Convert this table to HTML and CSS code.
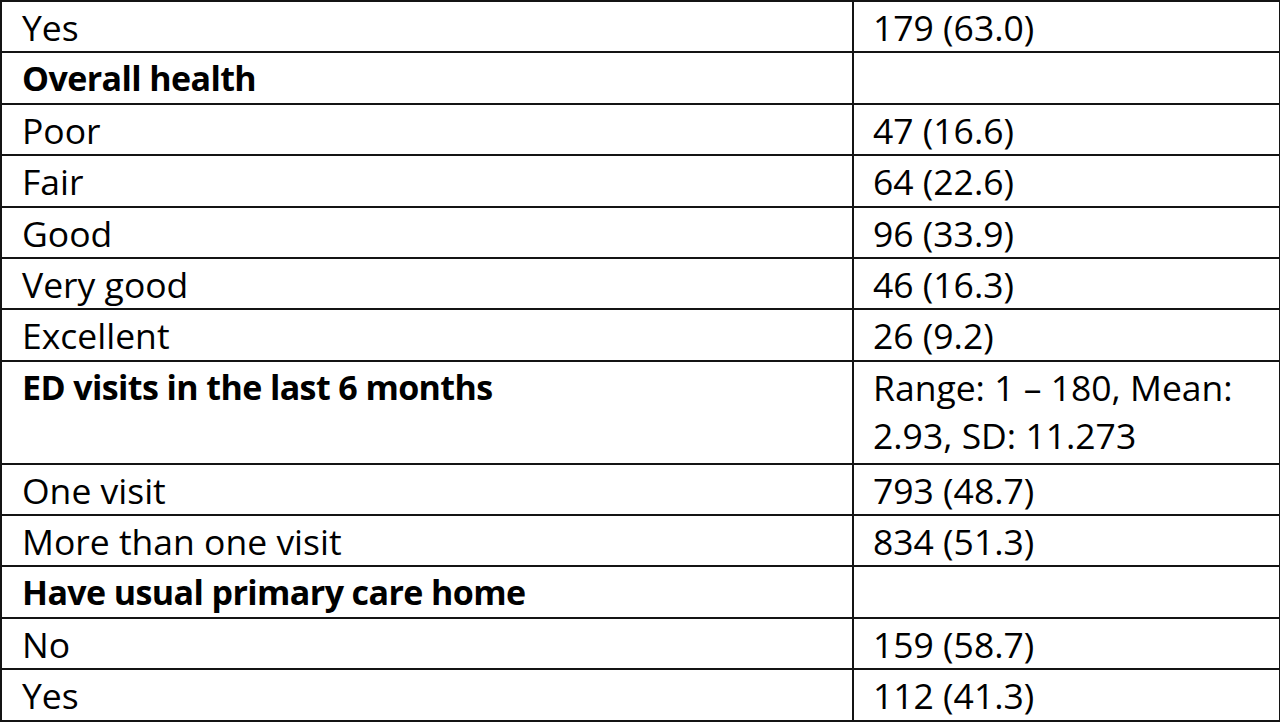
FILE: index.html
```html
<!DOCTYPE html>
<html>
<head>
<meta charset="utf-8">
<link rel="stylesheet" href="styles.css">
</head>
<body>
<table class="stats">
  <colgroup><col class="c-label"><col class="c-value"></colgroup>
  <tbody>
    <tr><td>Yes</td><td class="val">179 (63.0)</td></tr>
    <tr><td class="head">Overall health</td><td class="val"></td></tr>
    <tr><td>Poor</td><td class="val">47 (16.6)</td></tr>
    <tr><td>Fair</td><td class="val">64 (22.6)</td></tr>
    <tr><td>Good</td><td class="val">96 (33.9)</td></tr>
    <tr><td>Very good</td><td class="val">46 (16.3)</td></tr>
    <tr><td>Excellent</td><td class="val">26 (9.2)</td></tr>
    <tr class="tall"><td class="head">ED visits in the last 6 months</td><td class="val">Range: 1 – 180, Mean: 2.93, SD: 11.273</td></tr>
    <tr><td>One visit</td><td class="val">793 (48.7)</td></tr>
    <tr><td>More than one visit</td><td class="val">834 (51.3)</td></tr>
    <tr><td class="head">Have usual primary care home</td><td class="val"></td></tr>
    <tr><td>No</td><td class="val">159 (58.7)</td></tr>
    <tr><td>Yes</td><td class="val">112 (41.3)</td></tr>
  </tbody>
</table>
</body>
</html>
```
FILE: styles.css
```css
html, body {
  margin: 0;
  padding: 0;
  background: #ffffff;
}
.stats {
  border-collapse: collapse;
  width: 1279px;
  table-layout: fixed;
  font-family: "Open Sans", Lato, sans-serif;
  font-size: 35.5px;
  line-height: 48.4px;
  color: #000;
}
.c-label { width: 852px; }
.c-value { width: 427px; }
.stats td {
  border: 2px solid #141414;
  padding: 1px 20px 0 20px;
  vertical-align: top;
  white-space: nowrap;
}
.stats tr.tall td { padding-bottom: 3px; white-space: normal; }
.stats td.val { padding-left: 19px; padding-right: 24px; }
.stats td.head {
  font-weight: 700;
  font-size: 34px;
  letter-spacing: -0.6px;
}
```
